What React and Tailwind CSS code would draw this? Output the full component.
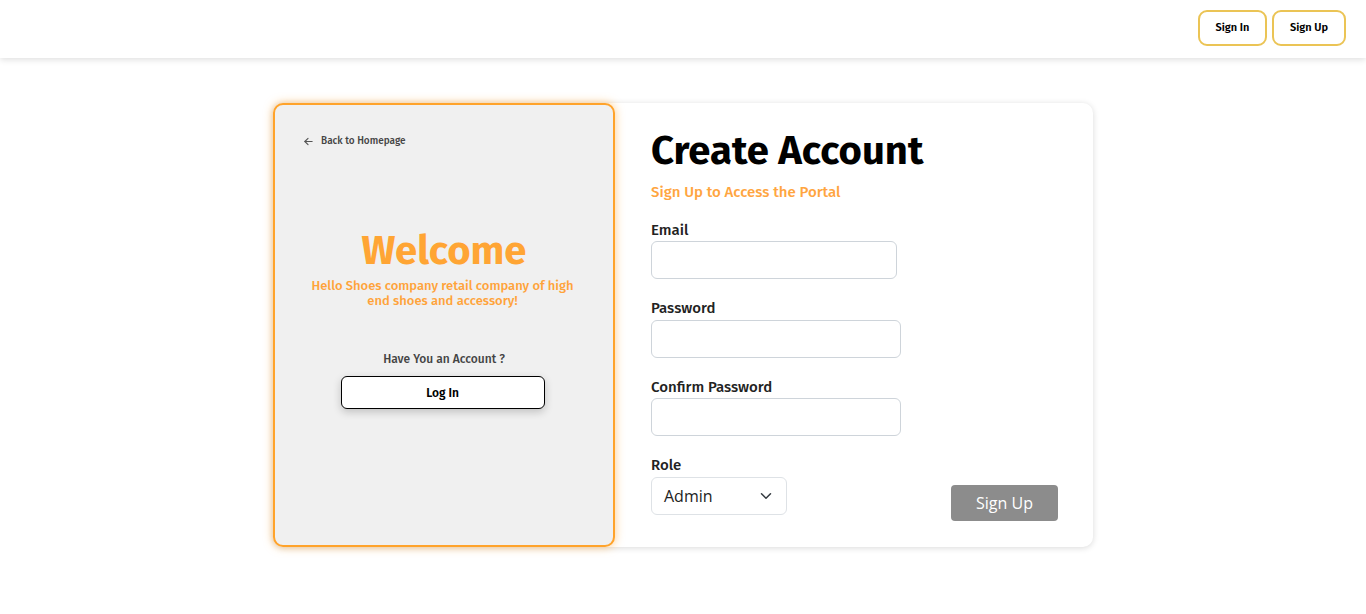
import React from "react";

export default function App() {
  return (
    <div className="min-h-[614px] bg-white font-['Fira_Sans',Roboto,'Noto_Sans',sans-serif]">
      <header className="h-[58px] bg-white shadow-[0_2px_6px_rgba(0,0,0,0.12)] flex items-start justify-end pr-[20px] pt-[10px] gap-[5px] relative z-10">
        <button className="h-[36px] w-[69px] rounded-[9px] border-2 border-[#ebc455] bg-white text-[11px] font-semibold text-black">
          Sign In
        </button>
        <button className="h-[36px] w-[74px] rounded-[9px] border-2 border-[#ebc455] bg-white text-[11px] font-semibold text-black">
          Sign Up
        </button>
      </header>

      <main className="flex justify-center pt-[45px]">
        <div className="w-[820px] h-[444px] flex bg-white rounded-[10px] shadow-[0_1px_6px_rgba(0,0,0,0.15)]">
          <section className="w-[342px] h-full shrink-0 rounded-[10px] border-2 border-[#ffa32b] bg-[#f0f0f0] shadow-[0_0_10px_rgba(255,163,43,0.55)] flex flex-col items-center">
            <div className="self-start flex items-center gap-[7px] pl-[28px] pt-[29px] text-[10px] leading-[15px] text-[#444] font-medium">
              <svg width="11" height="11" viewBox="0 0 24 24" fill="none" stroke="#555" strokeWidth="2.4" strokeLinecap="round" strokeLinejoin="round">
                <path d="M20 12H4" />
                <path d="M11 19l-7-7 7-7" />
              </svg>
              <span>Back to Homepage</span>
            </div>
            <h2 className="mt-[78px] text-[40px] leading-[48px] font-bold text-[#ffa534]">Welcome</h2>
            <p className="mt-[3px] mr-[3px] w-[276px] text-center text-[13px] leading-[15px] font-medium text-[#ffa33a]">
              Hello Shoes company retail company of high end shoes and accessory!
            </p>
            <p className="mt-[42px] text-[12px] leading-[18px] font-medium text-[#444]">Have You an Account ?</p>
            <button className="mt-[8px] mr-[3px] w-[204px] h-[33px] rounded-[6px] border border-black bg-white text-[12px] font-semibold text-black shadow-[0_3px_8px_rgba(0,0,0,0.2)]">
              Log In
            </button>
          </section>

          <section className="flex-1 pl-[36px] pr-[35px] pt-[24px]">
            <h1 className="text-[40px] leading-[48px] font-bold text-black">Create Account</h1>
            <p className="mt-[7px] text-[15px] leading-[20px] font-medium text-[#ffa540]">Sign Up to Access the Portal</p>

            <label className="block mt-[18px] text-[15px] leading-[20px] font-medium text-[#222]">Email</label>
            <input className="block mt-[1px] w-[246px] h-[38px] rounded-[6px] border border-[#ced4da] bg-white" />

            <label className="block mt-[19px] text-[15px] leading-[20px] font-medium text-[#222]">Password</label>
            <input type="password" className="block mt-[2px] w-[250px] h-[38px] rounded-[6px] border border-[#ced4da] bg-white" />

            <label className="block mt-[19px] text-[15px] leading-[20px] font-medium text-[#222]">Confirm Password</label>
            <input type="password" className="block mt-[1px] w-[250px] h-[38px] rounded-[6px] border border-[#ced4da] bg-white" />

            <div className="flex items-start justify-between mt-[19px]">
              <div>
                <label className="block text-[15px] leading-[20px] font-medium text-[#222]">Role</label>
                <div className="mt-[2px] w-[136px] h-[38px] rounded-[6px] border border-[#dee2e6] bg-white flex items-center justify-between pl-[12px] pr-[14px] font-['Open_Sans',sans-serif] text-[16px] text-[#222]">
                  <span>Admin</span>
                  <svg width="12" height="12" viewBox="0 0 16 16" fill="none" stroke="#343a40" strokeWidth="2" strokeLinecap="round" strokeLinejoin="round">
                    <path d="M2 5l6 6 6-6" />
                  </svg>
                </div>
              </div>
              <button className="mt-[30px] w-[107px] h-[36px] rounded-[4px] bg-[#8c8c8c] text-white text-[16px] font-['Open_Sans',sans-serif]">
                Sign Up
              </button>
            </div>
          </section>
        </div>
      </main>
    </div>
  );
}
